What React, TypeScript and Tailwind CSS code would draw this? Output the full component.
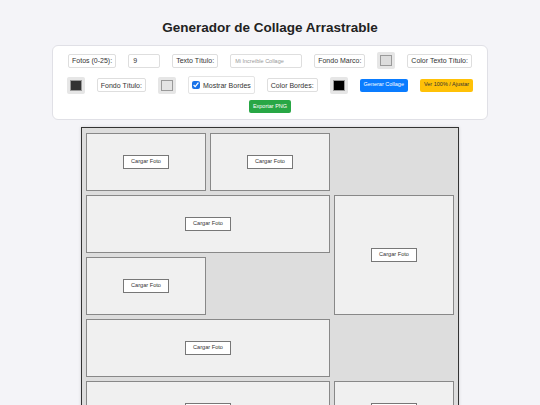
import { useState } from "react";

type Cell = { id: number; area: string };

// Layout of the collage grid: 3 columns, spans set per photo slot.
const cells: Cell[] = [
  { id: 1, area: "col-start-1 row-start-1" },
  { id: 2, area: "col-start-2 row-start-1" },
  { id: 3, area: "col-start-1 col-span-2 row-start-2" },
  { id: 4, area: "col-start-3 row-start-2 row-span-2" },
  { id: 5, area: "col-start-1 row-start-3" },
  { id: 6, area: "col-start-1 col-span-2 row-start-4" },
  { id: 7, area: "col-start-1 col-span-2 row-start-5" },
  { id: 8, area: "col-start-3 row-start-5" },
  { id: 9, area: "col-start-1 row-start-6" },
];

function Label({ children }: { children: React.ReactNode }) {
  return (
    <span className="flex h-[14px] items-center rounded-[2px] border border-[#dedede] bg-white px-[3px] text-[7px] leading-none text-[#333]">
      {children}
    </span>
  );
}

function Swatch({ color }: { color: string }) {
  return (
    <span className="flex h-[17px] w-[18px] items-center justify-center rounded-[2px] bg-[#e6e6e6]">
      <span className="h-[11px] w-[12px] border border-[#9a9a9a]" style={{ background: color }} />
    </span>
  );
}

export default function App() {
  const [count, setCount] = useState("9");
  const [borders, setBorders] = useState(true);

  return (
    <div className="flex min-h-screen flex-col items-center bg-[#f4f4f8] pt-[19px] font-['Liberation_Sans',Arial,sans-serif]">
      <h1 className="mb-[8px] text-[13.5px] font-bold leading-[18px] text-[#222]">
        Generador de Collage Arrastrable
      </h1>

      <div className="flex w-[436px] flex-col items-center gap-y-[6px] rounded-[6px] border border-[#e0e0e6] bg-white pt-[6px] pb-[6px]">
        <div className="flex items-center gap-x-[12px]">
          <Label>Fotos (0-25):</Label>
          <input
            value={count}
            onChange={(e) => setCount(e.target.value)}
            className="h-[14px] w-[32px] rounded-[2px] border border-[#dedede] px-[4px] text-[7px] text-[#333] outline-none"
          />
          <Label>Texto Título:</Label>
          <input
            placeholder="Mi Increíble Collage"
            className="h-[14px] w-[72px] rounded-[2px] border border-[#dedede] px-[4px] text-[5.5px] text-[#333] outline-none placeholder:text-[#999]"
          />
          <Label>Fondo Marco:</Label>
          <Swatch color="#dddddd" />
          <Label>Color Texto Título:</Label>
        </div>

        <div className="mt-[1px] flex items-center gap-x-[12px]">
          <Swatch color="#333333" />
          <Label>Fondo Título:</Label>
          <Swatch color="#e4e4e4" />
          <label className="flex h-[18px] items-center gap-[3px] rounded-[2px] border border-[#e4e4e4] bg-white px-[3px] text-[7px] leading-none text-[#333]">
            <input
              type="checkbox"
              checked={borders}
              onChange={(e) => setBorders(e.target.checked)}
              className="m-0 h-[8px] w-[8px] accent-[#1a73e8]"
            />
            Mostrar Bordes
          </label>
          <Label>Color Bordes:</Label>
          <Swatch color="#000000" />
          <button className="h-[13px] rounded-[2px] bg-[#0a7cff] px-[4px] text-[5.5px] leading-none text-white">
            Generar Collage
          </button>
          <button className="h-[13px] rounded-[2px] bg-[#ffc107] px-[4px] text-[5.5px] leading-none text-[#333]">
            Ver 100% / Ajustar
          </button>
        </div>

        <button className="h-[13px] rounded-[2px] bg-[#28a745] px-[4px] text-[5.5px] leading-none text-white">
          Exportar PNG
        </button>
      </div>

      <div className="mt-[7px] border border-[#333] bg-[#dddddd] px-[4px] pt-[5px] pb-[4px] shadow-[0_0_3px_rgba(0,0,0,0.15)]">
        <div className="grid grid-cols-[repeat(3,120px)] auto-rows-[58px] gap-[4px]">
          {cells.map((c) => (
            <div
              key={c.id}
              className={`${c.area} flex items-center justify-center border border-[#888] bg-[#f0f0f0]`}
            >
              <button className="h-[14px] border border-[#777] bg-white px-[7px] text-[5.6px] leading-none text-[#333]">
                Cargar Foto
              </button>
            </div>
          ))}
        </div>
      </div>
    </div>
  );
}
